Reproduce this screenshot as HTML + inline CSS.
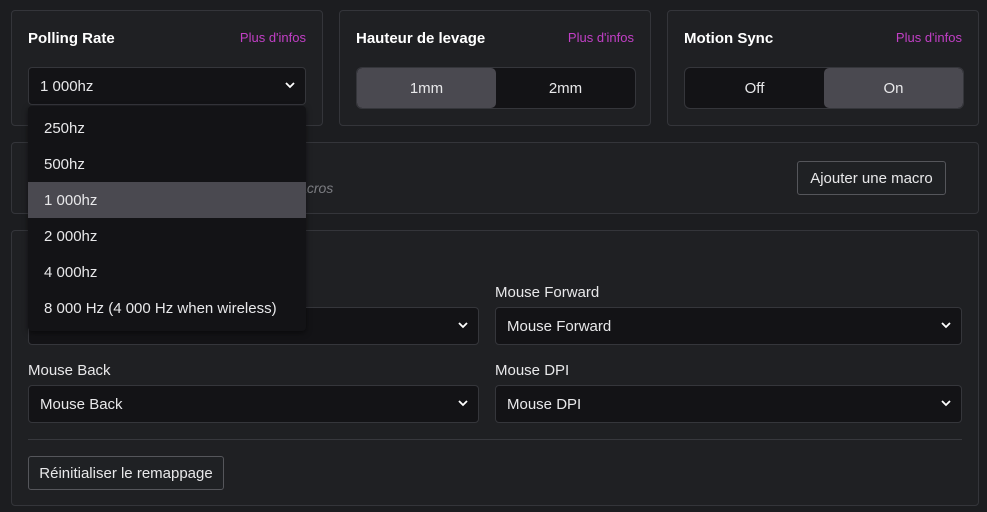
<!DOCTYPE html>
<html><head><meta charset="utf-8"><style>
*{box-sizing:border-box;margin:0;padding:0}
body{width:987px;height:512px;background:#1c1d20;font-family:"Liberation Sans",sans-serif;color:#e8e8ea;position:relative;overflow:hidden;font-size:15px}
.card{position:absolute;background:#1f2023;border:1px solid #34353a;border-radius:4px}
.t{position:absolute;font-weight:bold;font-size:15px;color:#fff}
.m{position:absolute;font-size:13px;color:#c23fc6;width:100px;text-align:right}
.sel{position:absolute;background:#131316;border:1px solid #35363b;border-radius:4px;font-size:15px;padding-left:11px;display:flex;align-items:center}
.chev{position:absolute;right:10px;top:50%;margin-top:-4px}
.seg{position:absolute;background:#131316;border:1px solid #35363b;border-radius:6px;display:flex;overflow:hidden}
.seg div{flex:1;display:flex;align-items:center;justify-content:center;font-size:15px}
.on{background:#4a4950;border-radius:5px}
.btn{position:absolute;background:#1f2124;border:1px solid #55565b;border-radius:3px;font-size:15px;display:flex;align-items:center;justify-content:center}
.lbl{position:absolute;font-size:15px}
.dd{position:absolute;left:28px;top:106px;width:278px;height:225px;background:#131316;border-radius:4px;box-shadow:0 2px 6px rgba(0,0,0,.5)}
.dd div{height:36px;padding-left:16px;display:flex;align-items:center;font-size:15px}
.dd .h{background:#4a4950}
</style></head><body>
<div class="card" style="left:11px;top:10px;width:312px;height:116px"></div>
<div class="t" style="left:28px;top:30px">Polling Rate</div>
<div class="m" style="left:206px;top:30px">Plus d'infos</div>
<div class="sel" style="left:28px;top:67px;width:278px;height:38px">1 000hz<svg class="chev" width="10" height="7" viewBox="0 0 10 7"><path d="M1 1l4 4 4-4" stroke="#fff" stroke-width="1.8" fill="none"/></svg></div>

<div class="card" style="left:339px;top:10px;width:312px;height:116px"></div>
<div class="t" style="left:356px;top:30px">Hauteur de levage</div>
<div class="m" style="left:534px;top:30px">Plus d'infos</div>
<div class="seg" style="left:356px;top:67px;width:280px;height:42px"><div class="on">1mm</div><div>2mm</div></div>

<div class="card" style="left:667px;top:10px;width:312px;height:116px"></div>
<div class="t" style="left:684px;top:30px">Motion Sync</div>
<div class="m" style="left:862px;top:30px">Plus d'infos</div>
<div class="seg" style="left:684px;top:67px;width:280px;height:42px"><div>Off</div><div class="on">On</div></div>

<div class="card" style="left:11px;top:142px;width:968px;height:72px"></div>
<div style="position:absolute;left:236px;top:180px;font-style:italic;color:#7c7d82;font-size:14px">Aucune macros</div>
<div class="btn" style="left:797px;top:161px;width:149px;height:34px">Ajouter une macro</div>

<div class="card" style="left:11px;top:230px;width:968px;height:276px"></div>
<div class="lbl" style="left:28px;top:284px">Middle Click</div>
<div class="sel" style="left:28px;top:307px;width:451px;height:38px">Middle Click<svg class="chev" width="10" height="7" viewBox="0 0 10 7"><path d="M1 1l4 4 4-4" stroke="#fff" stroke-width="1.8" fill="none"/></svg></div>
<div class="lbl" style="left:495px;top:284px">Mouse Forward</div>
<div class="sel" style="left:495px;top:307px;width:467px;height:38px">Mouse Forward<svg class="chev" width="10" height="7" viewBox="0 0 10 7"><path d="M1 1l4 4 4-4" stroke="#fff" stroke-width="1.8" fill="none"/></svg></div>
<div class="lbl" style="left:28px;top:362px">Mouse Back</div>
<div class="sel" style="left:28px;top:385px;width:451px;height:38px">Mouse Back<svg class="chev" width="10" height="7" viewBox="0 0 10 7"><path d="M1 1l4 4 4-4" stroke="#fff" stroke-width="1.8" fill="none"/></svg></div>
<div class="lbl" style="left:495px;top:362px">Mouse DPI</div>
<div class="sel" style="left:495px;top:385px;width:467px;height:38px">Mouse DPI<svg class="chev" width="10" height="7" viewBox="0 0 10 7"><path d="M1 1l4 4 4-4" stroke="#fff" stroke-width="1.8" fill="none"/></svg></div>
<div style="position:absolute;left:28px;top:439px;width:934px;height:1px;background:#37383d"></div>
<div class="btn" style="left:28px;top:456px;width:196px;height:34px">Réinitialiser le remappage</div>

<div class="dd">
<div style="margin-top:4px">250hz</div><div>500hz</div><div class="h">1 000hz</div><div>2 000hz</div><div>4 000hz</div><div>8 000 Hz (4 000 Hz when wireless)</div>
</div>
</body></html>
